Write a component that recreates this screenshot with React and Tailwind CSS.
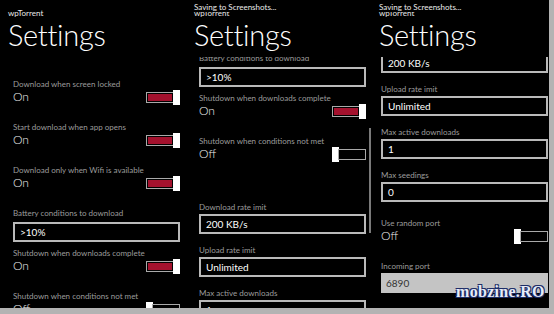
const ITEMS = [
  { type: "toggle", label: "Download when screen locked", on: true },
  { type: "toggle", label: "Start download when app opens", on: true },
  { type: "toggle", label: "Download only when Wifi is available", on: true },
  { type: "text", label: "Battery conditions to download", value: ">10%", tight: true },
  { type: "toggle", label: "Shutdown when downloads complete", on: true },
  { type: "toggle", label: "Shutdown when conditions not met", on: false },
  { type: "gap", size: "h-[23px]" },
  { type: "text", label: "Download rate imit", value: "200 KB/s" },
  { type: "text", label: "Upload rate imit", value: "Unlimited" },
  { type: "text", label: "Max active downloads", value: "1" },
  { type: "text", label: "Max seedings", value: "0" },
  { type: "gap", size: "h-[5px]" },
  { type: "toggle", label: "Use random port", on: false },
  { type: "text", label: "Incoming port", value: "6890", filled: true }
];

const PANELS = [
  { width: "w-[183px]", pad: "pl-[13px] pr-[3px]", head: "pl-[8px]", scroll: "mt-0", saving: false },
  { width: "w-[185px]", pad: "pl-[16px] pr-[2px]", head: "pl-[11px]", scroll: "-mt-[155px]", saving: true },
  { width: "w-[181px]", pad: "pl-[13px] pr-[1px]", head: "pl-[11px]", scroll: "-mt-[316px]", saving: true, scrollbar: true }
];

export default function App() {
  return (
    <div
      className="h-[314px] w-[554px] overflow-hidden bg-[#b3b3b3]"
      style={{ fontFamily: "Lato, 'Open Sans', sans-serif" }}
    >
      <div className="relative flex h-[308px] w-[549px] bg-black">
        {PANELS.map((panel, i) => (
          <Panel key={i} panel={panel} />
        ))}

        <div className="absolute left-[456px] top-[281px] text-[16px] font-bold leading-[22px] tracking-[0.3px] text-[#e6ecf8] [font-family:'Liberation_Serif',serif] [text-shadow:1px_1px_0_#1c2c66,-1px_-1px_0_#1c2c66,1px_-1px_0_#1c2c66,-1px_1px_0_#1c2c66]">
          mobzine.RO
        </div>
      </div>
    </div>
  );
}

function Panel({ panel }) {
  return (
    <div className={`relative flex h-full shrink-0 flex-col ${panel.width}`}>
      <header className={`h-[57px] shrink-0 pt-[8px] ${panel.head}`}>
        <div className="h-[10px] text-[8px] leading-[10px] text-[#e8e8e8]">
          wpTorrent
        </div>
        <h1 className="text-[29px] font-light leading-[34px] tracking-[-0.3px] text-white">
          Settings
        </h1>
      </header>

      {panel.saving && (
        <div className={`absolute inset-x-0 top-0 h-[12px] bg-black pt-[2px] text-[8px] leading-[10px] text-[#ececec] ${panel.head}`}>
          Saving to Screenshots...
        </div>
      )}

      {panel.scrollbar && (
        <div className="absolute left-[1px] top-[128px] h-[105px] w-[2px] bg-[#7a7a7a]" />
      )}

      <div className="min-h-0 flex-1 overflow-hidden">
        <div className={`flex flex-col pt-[22px] ${panel.scroll} ${panel.pad}`}>
          {ITEMS.map((item, i) => {
            if (item.type === "gap") return <div key={i} className={item.size} />;
            if (item.type === "toggle") return <ToggleRow key={i} item={item} />;
            return <TextRow key={i} item={item} />;
          })}
        </div>
      </div>
    </div>
  );
}

function ToggleRow({ item }) {
  return (
    <div className="h-[43px] shrink-0">
      <div className="h-[10px] whitespace-nowrap text-[8px] leading-[10px] text-[#9c9c9c]">
        {item.label}
      </div>
      <div className="flex h-[16px] items-center justify-between">
        <span className="text-[12px] font-light leading-[16px] text-[#ededed]">
          {item.on ? "On" : "Off"}
        </span>
        <Toggle on={item.on} />
      </div>
    </div>
  );
}

function Toggle({ on }) {
  if (on) {
    return (
      <div className="flex items-center">
        <div className="h-[11px] w-[28px] border border-[#a9a9a9] bg-black p-[1px]">
          <div className="h-full w-full bg-[#a3112d]" />
        </div>
        <div className="-ml-[1px] h-[15px] w-[7px] bg-white" />
      </div>
    );
  }
  return (
    <div className="flex items-center">
      <div className="h-[15px] w-[7px] bg-white" />
      <div className="-ml-[1px] h-[11px] w-[28px] border border-[#a9a9a9] bg-black" />
    </div>
  );
}

function TextRow({ item }) {
  return (
    <div className={item.tight ? "h-[40px] shrink-0" : "h-[43px] shrink-0"}>
      <div className="h-[10px] whitespace-nowrap text-[8px] leading-[10px] text-[#9c9c9c]">
        {item.label}
      </div>
      <div
        className={[
          "flex h-[20px] items-center pl-[5px] text-[10px]",
          item.tight ? "mt-[4px]" : "mt-[2px]",
          item.filled
            ? "bg-[#c4c4c4] text-[#333333]"
            : "border-2 border-[#b9b9b9] text-white"
        ].join(" ")}
      >
        {item.value}
      </div>
    </div>
  );
}
